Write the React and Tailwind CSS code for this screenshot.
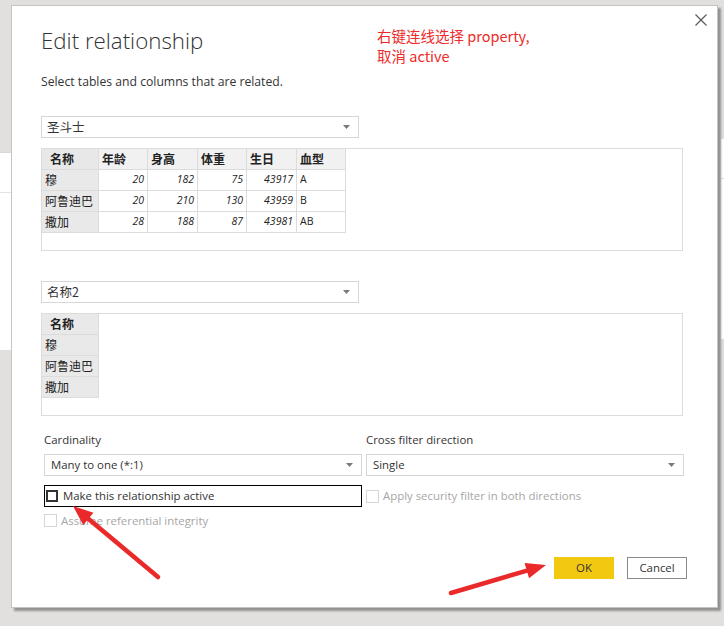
import React from "react";

const FONT = { fontFamily: '"Open Sans", "Noto Sans CJK SC", sans-serif' };
const CJK = { fontFamily: '"Noto Sans CJK SC", "Open Sans", sans-serif' };

function Caret() {
  return (
    <svg width="7" height="4" viewBox="0 0 7 4" className="shrink-0">
      <path d="M0 0 L7 0 L3.5 4 Z" fill="#7a7a7a" />
    </svg>
  );
}

function Dropdown({ children, cjk, className = "" }) {
  return (
    <div
      className={`h-[22px] border border-[#d6d6d6] bg-white flex items-center justify-between pl-[5px] pr-[8px] text-[#333] ${
        cjk ? "text-[12.5px]" : "text-[11.4px]"
      } ${className}`}
      style={cjk ? CJK : FONT}
    >
      <span className="leading-none">{children}</span>
      <Caret />
    </div>
  );
}

const rows1 = [
  ["穆", "20", "182", "75", "43917", "A"],
  ["阿鲁迪巴", "20", "210", "130", "43959", "B"],
  ["撒加", "28", "188", "87", "43981", "AB"],
];
const widths = ["w-[57px]", "w-[49px]", "w-[50px]", "w-[49px]", "w-[50px]", "w-[49px]"];

function Table1() {
  const heads = ["名称", "年龄", "身高", "体重", "生日", "血型"];
  return (
    <div className="h-[103px] border border-[#dcdcdc] bg-white">
      <div className="flex flex-col w-fit">
        <div className="flex h-[21px]">
          {heads.map((h, i) => (
            <div
              key={h}
              className={`${widths[i]} border-r border-b border-[#dcdcdc] flex items-center font-bold text-[12px] text-[#222] ${
                i === 0 ? "bg-[#e8e8e8] pl-[8px]" : "bg-[#f1f1f1] pl-[3px]"
              }`}
              style={CJK}
            >
              {h}
            </div>
          ))}
        </div>
        {rows1.map((r) => (
          <div key={r[0]} className="flex h-[21px]">
            {r.map((c, i) => (
              <div
                key={i}
                className={`${widths[i]} border-r border-b border-[#dcdcdc] flex items-center text-[#222] ${
                  i === 0
                    ? "bg-[#e9e9e9] pl-[3px] text-[12px]"
                    : i === 5
                    ? "bg-white pl-[3px] text-[10.5px]"
                    : "bg-white justify-end pr-[3px] text-[10.5px] italic"
                }`}
                style={i === 0 ? CJK : FONT}
              >
                {c}
              </div>
            ))}
          </div>
        ))}
      </div>
    </div>
  );
}

function Table2() {
  const cells = ["名称", "穆", "阿鲁迪巴", "撒加"];
  return (
    <div className="h-[103px] border border-[#dcdcdc] bg-white">
      <div className="flex flex-col w-fit">
        {cells.map((c, i) => (
          <div
            key={c}
            className={`w-[57px] h-[21px] bg-[#e9e9e9] border-r border-b border-[#dcdcdc] flex items-center text-[12px] text-[#222] ${
              i === 0 ? "font-bold pl-[8px]" : "pl-[3px]"
            }`}
            style={CJK}
          >
            {c}
          </div>
        ))}
      </div>
    </div>
  );
}

function Arrow({ x1, y1, x2, y2 }) {
  const dx = x2 - x1;
  const dy = y2 - y1;
  const len = Math.sqrt(dx * dx + dy * dy);
  const ux = dx / len;
  const uy = dy / len;
  const hl = 20;
  const hw = 8;
  const bx = x2 - ux * hl;
  const by = y2 - uy * hl;
  const px = -uy;
  const py = ux;
  const pts = `${x2},${y2} ${bx + px * hw},${by + py * hw} ${bx - px * hw},${by - py * hw}`;
  return (
    <g>
      <line x1={x1} y1={y1} x2={bx + ux * 2} y2={by + uy * 2} stroke="#ea2a2a" strokeWidth="4.5" strokeLinecap="round" />
      <polygon points={pts} fill="#ea2a2a" />
    </g>
  );
}

export default function App() {
  return (
    <div className="relative w-[724px] h-[626px] bg-[#e1e0de] overflow-hidden" style={FONT}>
      {/* background windows peeking out */}
      <div className="absolute left-0 top-[152px] w-[11px] h-[198px] bg-white border-t border-[#d8d8d8]">
        <div className="mt-[39px] border-t border-[#e4e4e4]" />
      </div>
      <div className="absolute right-0 top-[139px] w-[3px] h-[200px] bg-white">
        <div className="mt-[39px] border-t border-[#dedede]" />
      </div>

      {/* dialog */}
      <div className="absolute left-[11px] top-[5px] w-[707px] h-[603px] bg-white border border-[#c4c4c4] shadow-[3px_3px_2px_rgba(0,0,0,0.35)]">
        <div className="absolute right-[9px] top-[7px] w-[14px] h-[14px]">
          <svg width="14" height="14" viewBox="0 0 14 14">
            <path d="M1.5 1.5 L12.5 12.5 M12.5 1.5 L1.5 12.5" stroke="#5a5a5a" strokeWidth="1.2" />
          </svg>
        </div>

        <div
          className="absolute left-[365px] top-[20px] text-[14.5px] leading-[20px] text-[#ee2a2a]"
          style={CJK}
        >
          <div>右键连线选择 property,</div>
          <div>取消 active</div>
        </div>

        <div className="pl-[29px] pr-[34px]">
          <h1 className="mt-[17px] h-[36px] text-[22.3px] font-light leading-[36px] text-[#333]">
            Edit relationship
          </h1>
          <p className="mt-[13px] h-[20px] text-[12.2px] leading-[20px] text-[#333]">
            Select tables and columns that are related.
          </p>

          <Dropdown cjk className="mt-[24px] w-[318px]">
            圣斗士
          </Dropdown>
          <div className="mt-[10px] w-[642px]">
            <Table1 />
          </div>

          <Dropdown cjk className="mt-[30px] w-[318px]">
            名称2
          </Dropdown>
          <div className="mt-[10px] w-[642px]">
            <Table2 />
          </div>

          <div className="ml-[3px] mt-[15px] grid grid-cols-[318px_318px] gap-x-[4px]">
            <div>
              <div className="h-[18px] text-[11.4px] leading-[18px] text-[#333]">Cardinality</div>
              <Dropdown className="mt-[5px] pl-[6px]">Many to one (*:1)</Dropdown>
              <div className="mt-[9px] h-[22px] border border-black flex items-center pl-[1px]">
                <div className="w-[12px] h-[12px] border-2 border-[#333] bg-white" />
                <span className="ml-[5px] text-[11.4px] leading-none text-[#333]">
                  Make this relationship active
                </span>
              </div>
              <div className="mt-[7px] h-[13px] flex items-center">
                <div className="w-[13px] h-[13px] border border-[#d6d6d6] bg-white" />
                <span className="ml-[4px] text-[11.4px] leading-none text-[#a6a6a6]">
                  Assume referential integrity
                </span>
              </div>
            </div>
            <div>
              <div className="h-[18px] text-[11.4px] leading-[18px] text-[#333]">Cross filter direction</div>
              <Dropdown className="mt-[5px] pl-[6px]">Single</Dropdown>
              <div className="mt-[9px] h-[22px] flex items-center">
                <div className="w-[13px] h-[13px] border border-[#d6d6d6] bg-white" />
                <span className="ml-[4px] text-[11.4px] leading-none text-[#a6a6a6]">
                  Apply security filter in both directions
                </span>
              </div>
            </div>
          </div>

          <div className="mt-[30px] flex justify-end gap-[13px] mr-[-4px]">
            <button className="w-[60px] h-[22px] bg-[#f2c811] text-[11.4px] text-[#333] leading-none">
              OK
            </button>
            <button className="w-[60px] h-[22px] bg-white border border-[#8a8a8a] text-[11.4px] text-[#333] leading-none">
              Cancel
            </button>
          </div>
        </div>
      </div>

      {/* annotation arrows */}
      <svg className="absolute left-0 top-0 pointer-events-none" width="724" height="626">
        <Arrow x1={158} y1={577} x2={73} y2={506} />
        <Arrow x1={451} y1={593} x2={546} y2={565} />
      </svg>
    </div>
  );
}
